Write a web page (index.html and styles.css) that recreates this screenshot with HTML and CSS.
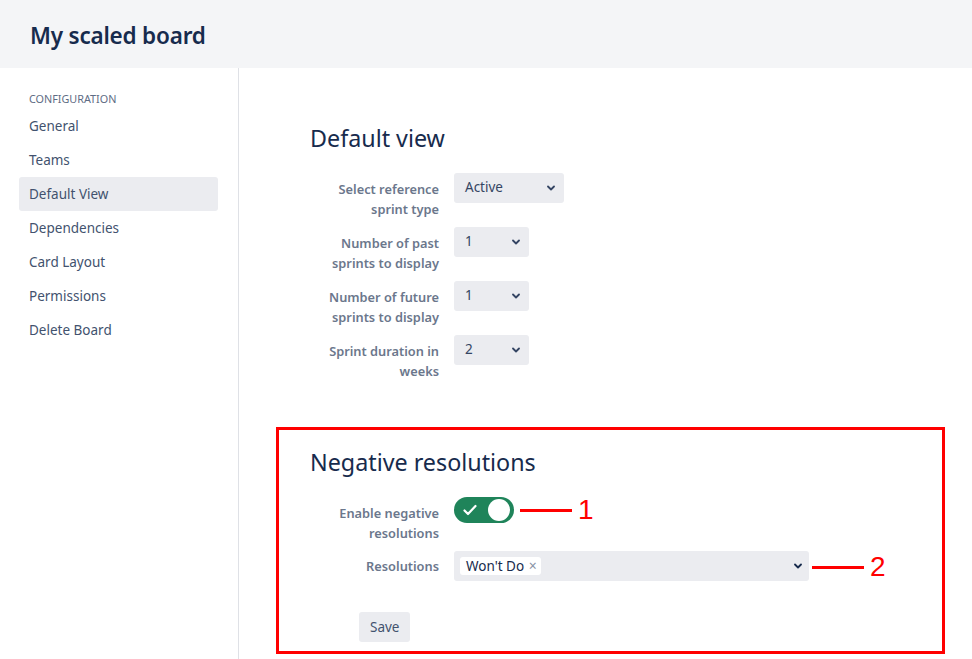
FILE: index.html
```html
<!DOCTYPE html>
<html lang="en">
<head>
<meta charset="utf-8">
<title>My scaled board</title>
<link rel="stylesheet" href="styles.css">
</head>
<body>
<header class="header">
  <h1 class="board-title">My scaled board</h1>
</header>
<div class="layout">
  <aside class="sidebar">
    <div class="side-heading">CONFIGURATION</div>
    <nav class="side-nav">
      <a class="nav-item">General</a>
      <a class="nav-item">Teams</a>
      <a class="nav-item active">Default View</a>
      <a class="nav-item">Dependencies</a>
      <a class="nav-item">Card Layout</a>
      <a class="nav-item">Permissions</a>
      <a class="nav-item">Delete Board</a>
    </nav>
  </aside>
  <main class="main">
    <section class="section plain">
      <h2 class="section-title">Default view</h2>
      <div class="form-row">
        <label class="field-label">Select reference sprint type</label>
        <div class="select wide"><span class="select-value">Active</span><svg class="chev" viewBox="0 0 8 6" width="8" height="6"><path d="M1 1.5 L4 4.5 L7 1.5" fill="none" stroke="currentColor" stroke-width="1.8" stroke-linecap="round" stroke-linejoin="round"/></svg></div>
      </div>
      <div class="form-row">
        <label class="field-label">Number of past sprints to display</label>
        <div class="select narrow"><span class="select-value">1</span><svg class="chev" viewBox="0 0 8 6" width="8" height="6"><path d="M1 1.5 L4 4.5 L7 1.5" fill="none" stroke="currentColor" stroke-width="1.8" stroke-linecap="round" stroke-linejoin="round"/></svg></div>
      </div>
      <div class="form-row">
        <label class="field-label">Number of future sprints to display</label>
        <div class="select narrow"><span class="select-value">1</span><svg class="chev" viewBox="0 0 8 6" width="8" height="6"><path d="M1 1.5 L4 4.5 L7 1.5" fill="none" stroke="currentColor" stroke-width="1.8" stroke-linecap="round" stroke-linejoin="round"/></svg></div>
      </div>
      <div class="form-row">
        <label class="field-label">Sprint duration in weeks</label>
        <div class="select narrow"><span class="select-value">2</span><svg class="chev" viewBox="0 0 8 6" width="8" height="6"><path d="M1 1.5 L4 4.5 L7 1.5" fill="none" stroke="currentColor" stroke-width="1.8" stroke-linecap="round" stroke-linejoin="round"/></svg></div>
      </div>
    </section>

    <section class="section highlighted">
      <h2 class="section-title">Negative resolutions</h2>
      <div class="form-row">
        <label class="field-label">Enable negative resolutions</label>
        <div class="toggle on">
          <svg class="toggle-check" viewBox="0 0 14 12" width="14" height="12"><path d="M1.5 6.5 L5 10 L12.5 2" fill="none" stroke="#fff" stroke-width="2.2" stroke-linecap="round" stroke-linejoin="round"/></svg>
          <span class="toggle-knob"></span>
        </div>
        <div class="callout"><span class="callout-line"></span><span class="callout-num">1</span></div>
      </div>
      <div class="form-row">
        <label class="field-label single">Resolutions</label>
        <div class="select multi">
          <span class="tag">Won't Do <span class="tag-x">×</span></span>
          <svg class="chev dark" viewBox="0 0 8 6" width="8" height="6"><path d="M1 1.5 L4 4.5 L7 1.5" fill="none" stroke="currentColor" stroke-width="1.8" stroke-linecap="round" stroke-linejoin="round"/></svg>
        </div>
        <div class="callout tight"><span class="callout-line"></span><span class="callout-num">2</span></div>
      </div>
      <div class="actions">
        <button class="btn">Save</button>
      </div>
    </section>
  </main>
</div>
</body>
</html>
```

FILE: styles.css
```css
* { box-sizing: border-box; }
html, body { margin: 0; padding: 0; }
body {
  font-family: "Noto Sans", "Open Sans", sans-serif;
  color: #172b4d;
  background: #fff;
  width: 972px;
  height: 659px;
  overflow: hidden;
}

.header {
  height: 68px;
  background: #f4f5f7;
  display: flex;
  align-items: center;
  padding-left: 30px;
  padding-top: 2px;
}
.board-title {
  margin: 0;
  font-size: 22.5px;
  font-weight: 600;
  color: #172b4d;
  letter-spacing: -0.2px;
}

.layout {
  display: flex;
  height: 591px;
}

.sidebar {
  width: 239px;
  flex: none;
  border-right: 1px solid #dfe1e6;
  padding: 23px 20px 0 19px;
}
.side-heading {
  font-size: 10.8px;
  line-height: 16px;
  color: #5e6c84;
  padding-left: 10px;
  margin-bottom: 2px;
}
.side-nav { display: flex; flex-direction: column; }
.nav-item {
  display: block;
  height: 34px;
  line-height: 34px;
  padding-left: 10px;
  font-size: 13.5px;
  color: #42526e;
  border-radius: 3px;
}
.nav-item.active { background: #ebecf0; }

.main {
  flex: 1;
  padding-left: 37px;
  padding-right: 27px;
}

.section { padding-left: 34px; }
.section.plain { padding-top: 54px; padding-bottom: 46px; }
.section.highlighted {
  border: 3px solid #ff0000;
  padding: 16px 0 9px 31px;
}
.section-title {
  margin: 0 0 19px 0;
  font-size: 23.3px;
  line-height: 32px;
  font-weight: 400;
  color: #172b4d;
}

.form-row {
  display: flex;
  align-items: flex-start;
  margin-bottom: 8px;
}
.form-row:last-child { margin-bottom: 0; }
.field-label {
  width: 129px;
  margin-right: 15px;
  padding-top: 6px;
  text-align: right;
  font-size: 12.8px;
  line-height: 20px;
  font-weight: 600;
  color: #6b778c;
}
.field-label.single { padding-top: 5px; }

.select {
  height: 30px;
  background: #ebecf0;
  border-radius: 3px;
  display: flex;
  align-items: center;
  justify-content: space-between;
  padding: 0 9px 0 11px;
  font-size: 13.5px;
  color: #344563;
}
.select.wide { width: 110px; }
.select.narrow { width: 75px; }
.select.multi { width: 355px; padding-left: 6px; padding-right: 7px; }
.select-value { margin-top: -2px; }
.chev { color: #344563; }
.chev.dark { color: #172b4d; }

.tag {
  background: #fff;
  border-radius: 3px;
  height: 18px;
  line-height: 18px;
  padding: 0 4px 0 6px;
  font-size: 13.5px;
  color: #172b4d;
}
.tag-x { color: #8993a4; font-size: 14px; margin-left: 1px; }

.toggle {
  width: 60px;
  height: 26px;
  border-radius: 13px;
  background: #1f845a;
  display: flex;
  align-items: center;
  justify-content: space-between;
  padding: 0 4px 0 9px;
}
.toggle-knob {
  width: 22px;
  height: 22px;
  border-radius: 50%;
  background: #fff;
}

.callout {
  display: flex;
  align-items: center;
  margin-left: 6px;
  height: 30px;
  margin-top: -2px;
}
.callout.tight { margin-left: 3px; margin-top: 1px; }
.callout-line {
  width: 52px;
  height: 3px;
  background: #ff0000;
}
.callout-num {
  margin-left: 6px;
  font-family: "Liberation Sans", "DejaVu Sans", sans-serif;
  font-size: 28px;
  line-height: 30px;
  color: #ff0000;
}

.actions { margin-top: 30px; padding-left: 49px; }
.btn {
  height: 30px;
  padding: 0 11px;
  border: none;
  border-radius: 3px;
  background: #ebecf0;
  font-family: inherit;
  font-size: 13.5px;
  color: #42526e;
}
```
